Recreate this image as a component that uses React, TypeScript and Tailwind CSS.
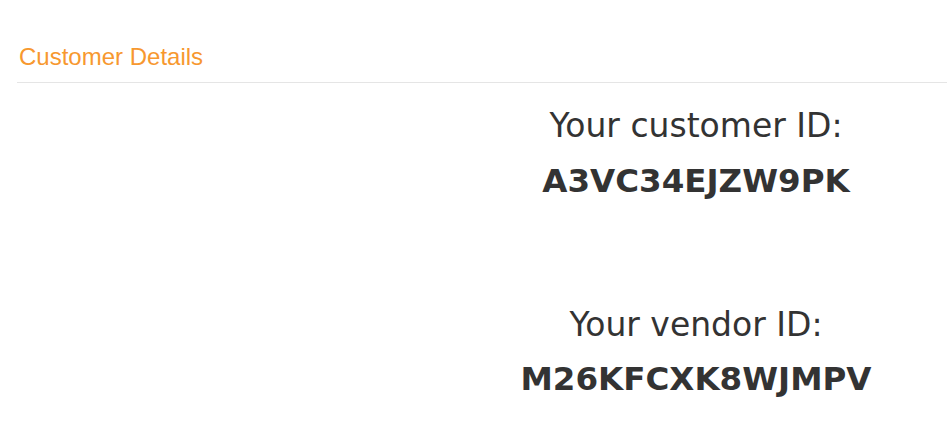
export default function App() {
  return (
    <div className="min-h-screen bg-white pl-[17px] pt-[43px] font-['Liberation_Sans',Arial,sans-serif]">
      <h2 className="px-[2px] pb-[11px] text-[24px] leading-[28px] text-[#f7982f]">Customer Details</h2>
      <div className="border-t border-[#e5e5e5]" />
      <div className="grid grid-cols-[428px_1fr] font-['DejaVu_Sans',Verdana,sans-serif] text-[#333333]">
        <div />
        <div className="flex flex-col items-center pt-[21px]">
          <div className="text-[33px] leading-[44px]">Your customer ID:</div>
          <div className="mt-[11px] text-[32.5px] font-bold leading-[44px]">A3VC34EJZW9PK</div>
          <div className="mt-[100px] text-[33px] leading-[44px]">Your vendor ID:</div>
          <div className="mt-[10px] text-[32.5px] font-bold leading-[44px]">M26KFCXK8WJMPV</div>
        </div>
      </div>
    </div>
  );
}
